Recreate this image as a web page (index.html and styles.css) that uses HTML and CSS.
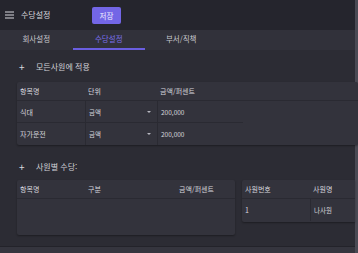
FILE: index.html
```html
<!DOCTYPE html>
<html lang="ko">
<head>
  <meta charset="UTF-8" />
  <title>수당설정</title>
  <link rel="stylesheet" href="styles.css">
</head>
<body>
  <div class="app">
    <header class="topbar">
      <span class="menu">
        <svg width="9" height="8" viewBox="0 0 9 8"><path d="M0 1h9M0 4h9M0 7h9" stroke="#d8d8de" stroke-width="1.2"/></svg>
      </span>
      <span class="title">수당설정</span>
      <button class="save">저장</button>
    </header>

    <nav class="tabs">
      <div class="tab">회사설정</div>
      <div class="tab active">수당설정</div>
      <div class="tab">부서/직책</div>
    </nav>

    <main class="content">
      <div class="section-title"><span class="plus">+</span>모든사원에 적용</div>
      <div class="table wide">
        <div class="row head">
          <div class="cell c1">항목명</div>
          <div class="cell c2">단위</div>
          <div class="cell c3">금액/퍼센트</div>
        </div>
        <div class="row">
          <div class="cell c1">식대</div>
          <div class="cell c2 select">금액<span class="caret"></span></div>
          <div class="cell c3">200,000</div>
        </div>
        <div class="row">
          <div class="cell c1">자가운전</div>
          <div class="cell c2 select">금액<span class="caret"></span></div>
          <div class="cell c3">200,000</div>
        </div>
      </div>

      <div class="section-title second"><span class="plus">+</span>사원별 수당:</div>
      <div class="pair">
        <div class="table left">
          <div class="row head">
            <div class="cell c1">항목명</div>
            <div class="cell c2">구분</div>
            <div class="cell c4">금액/퍼센트</div>
          </div>
        </div>
        <div class="table right">
          <div class="row head">
            <div class="cell e1">사원번호</div>
            <div class="cell e2">사원명</div>
          </div>
          <div class="row">
            <div class="cell e1">1</div>
            <div class="cell e2 split">나사원</div>
          </div>
        </div>
      </div>
    </main>
    <div class="footer"></div>
  </div>
</body>
</html>
```
FILE: styles.css
```css
* {
  box-sizing: border-box;
}

body {
  margin: 0;
  width: 358px;
  height: 253px;
  overflow: hidden;
  background-color: #2c2c34;
  font-family: "Noto Sans CJK KR", "Noto Sans", sans-serif;
  color: #d6d6dc;
  font-size: 7px;
}

.app {
  height: 253px;
  border-right: 3px solid #4a4a54;
  display: flex;
  flex-direction: column;
}

.topbar {
  height: 30px;
  background-color: #25252d;
  display: flex;
  align-items: center;
  padding-left: 5px;
}

.menu {
  display: flex;
  width: 9px;
  margin-right: 7px;
  margin-top: -1px;
}

.title {
  font-size: 8px;
  color: #d8d8de;
  width: 71px;
  margin-top: -1px;
}

.save {
  width: 29px;
  height: 17px;
  border: none;
  border-radius: 2px;
  background-color: #7366e6;
  color: #f0f0ff;
  font-family: inherit;
  font-size: 7.5px;
  padding: 0;
  margin-top: 1px;
}

.tabs {
  height: 20px;
  background-color: #31313a;
  display: flex;
}

.tab {
  width: 72.5px;
  text-align: center;
  line-height: 18px;
  font-size: 7.5px;
  color: #c8c8ce;
  border-bottom: 2px solid transparent;
}

.tab.active {
  color: #7a6ee8;
  border-bottom-color: #6a5ee0;
}

.content {
  flex: 1;
  padding: 0 0 0 17px;
}

.section-title {
  display: flex;
  align-items: center;
  height: 14px;
  margin-top: 9px;
  margin-bottom: 9px;
  font-size: 8px;
  color: #d0d0d6;
}

.section-title.second {
  margin-top: 14px;
  margin-bottom: 7px;
}

.plus {
  width: 19px;
  padding-left: 2px;
  font-size: 10px;
  color: #d8d8de;
}

.table {
  background-color: #33333c;
  border-radius: 2px;
  box-shadow: 0 1px 2px rgba(0, 0, 0, 0.35);
}

.table.wide {
  margin-right: -3px;
}

.row {
  display: flex;
  height: 22px;
  align-items: center;
}

.row.head {
  height: 19px;
  border-bottom: 1px solid #2a2a32;
}

.table.wide .row + .row {
  width: 226px;
  border-bottom: 1px solid #2a2a32;
}

.table.wide .row:last-child {
  border-bottom: none;
}

.cell {
  height: 100%;
  display: flex;
  align-items: center;
  padding-left: 3px;
}

.c1 {
  width: 68px;
}

.c2 {
  width: 72px;
}

.c3 {
  flex: 1;
  font-size: 6.5px;
}

.row.head .c3 {
  font-size: 7px;
}

.row + .row .c2,
.row + .row .c3 {
  border-left: 1px solid #2a2a32;
}

.c4 {
  flex: 1;
  padding-left: 22px;
}

.select {
  justify-content: space-between;
  padding-right: 6px;
  font-size: 6.5px;
}

.caret {
  width: 0;
  height: 0;
  border-left: 2.5px solid transparent;
  border-right: 2.5px solid transparent;
  border-top: 2.5px solid #b8b8c0;
}

.pair {
  display: flex;
  gap: 7px;
}

.table.left {
  width: 218px;
  height: 55px;
}

.table.right {
  flex: 1;
  height: 42px;
  border-radius: 2px 0 0 2px;
}

.e1 {
  width: 68px;
}

.e2 {
  flex: 1;
}

.split {
  border-left: 1px solid #2a2a32;
  font-size: 6.5px;
}

.footer {
  height: 7px;
  background-color: #35353e;
  border-top: 1px solid #23232a;
}
```
